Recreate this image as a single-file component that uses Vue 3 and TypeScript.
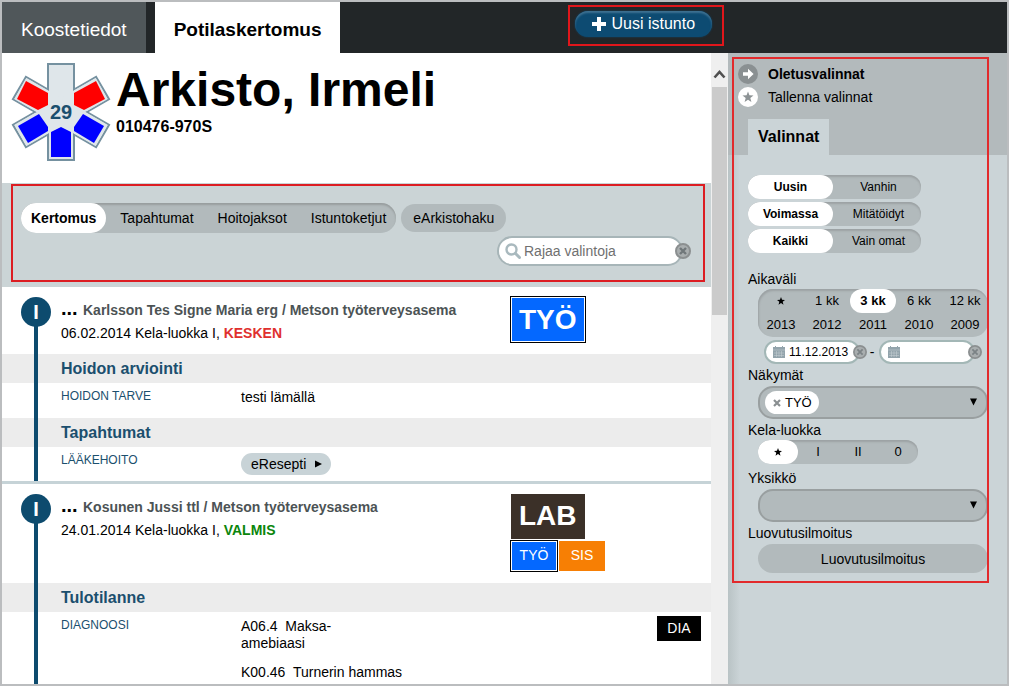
<script setup lang="ts">
import { ref } from 'vue'

interface Row {
  label: string
  lines?: string[][]
  link?: string
  badge?: string
}
interface Section {
  title: string
  rows: Row[]
}
interface Entry {
  mark: string
  author: string
  info: string
  status: string
  state: 'pending' | 'done'
  tall: boolean
  main: { text: string; kind: string }
  extra: { text: string; kind: string }[]
  sections: Section[]
}

const views = ['Kertomus', 'Tapahtumat', 'Hoitojaksot', 'Istuntoketjut']
const activeView = ref('Kertomus')

const toggles = ref([
  { options: ['Uusin', 'Vanhin'], active: 0 },
  { options: ['Voimassa', 'Mitätöidyt'], active: 0 },
  { options: ['Kaikki', 'Vain omat'], active: 0 },
])

const periods = ['★', '1 kk', '3 kk', '6 kk', '12 kk', '2013', '2012', '2011', '2010', '2009']
const activePeriod = ref('3 kk')
const classes = ['★', 'I', 'II', '0']
const activeClass = ref('★')

const search = ref('')
const from = ref('11.12.2013')
const to = ref('')

const entries: Entry[] = [
  {
    mark: 'I',
    author: 'Karlsson Tes Signe Maria erg / Metson työterveysasema',
    info: '06.02.2014 Kela-luokka I,',
    status: 'KESKEN',
    state: 'pending',
    tall: false,
    main: { text: 'TYÖ', kind: 'blue' },
    extra: [],
    sections: [
      { title: 'Hoidon arviointi', rows: [{ label: 'HOIDON TARVE', lines: [['testi lämällä']] }] },
      { title: 'Tapahtumat', rows: [{ label: 'LÄÄKEHOITO', link: 'eResepti' }] },
    ],
  },
  {
    mark: 'I',
    author: 'Kosunen Jussi ttl / Metson työterveysasema',
    info: '24.01.2014 Kela-luokka I,',
    status: 'VALMIS',
    state: 'done',
    tall: true,
    main: { text: 'LAB', kind: 'brown' },
    extra: [
      { text: 'TYÖ', kind: 'blue' },
      { text: 'SIS', kind: 'orange' },
    ],
    sections: [
      {
        title: 'Tulotilanne',
        rows: [
          {
            label: 'DIAGNOOSI',
            lines: [['A06.4\u00a0 Maksa-', 'amebiaasi'], ['K00.46\u00a0 Turnerin hammas']],
            badge: 'DIA',
          },
        ],
      },
    ],
  },
]

const starPoints = '5,0 6.3,3.5 10,3.7 7.1,6 8.1,9.6 5,7.5 1.9,9.6 2.9,6 0,3.7 3.7,3.5'
</script>

<template>
  <div class="app">
    <header class="top">
      <nav class="tabs">
        <a href="#koosteet" class="tab">Koostetiedot</a>
        <a href="#kertomus" class="tab current">Potilaskertomus</a>
      </nav>
      <div class="marked">
        <button type="button" class="new-session">
          <svg width="14" height="14" viewBox="0 0 14 14" aria-hidden="true">
            <path d="M5 0h4v5h5v4H9v5H5V9H0V5h5z" fill="#fff" />
          </svg>
          Uusi istunto
        </button>
      </div>
    </header>

    <div class="body">
      <main class="record">
        <section class="patient">
          <svg class="life" width="100" height="100" viewBox="11 62 100 100" aria-hidden="true">
            <g fill="#dfe6ea" stroke="#7591a0" stroke-width="2">
              <rect x="48" y="64" width="26" height="96" />
              <rect x="48" y="64" width="26" height="96" transform="rotate(60 61 112)" />
              <rect x="48" y="64" width="26" height="96" transform="rotate(-60 61 112)" />
            </g>
            <g fill="#dfe6ea">
              <rect x="49" y="65" width="24" height="94" />
              <rect x="49" y="65" width="24" height="94" transform="rotate(60 61 112)" />
              <rect x="49" y="65" width="24" height="94" transform="rotate(-60 61 112)" />
            </g>
            <g fill="#f00">
              <path d="M26 81 48 93V105L38 110 17 99z" />
              <path d="M96 81 74 93V105L84 110 105 99z" />
            </g>
            <g fill="#00f">
              <path d="M18 126 39 114 48 127V131L28 143z" />
              <path d="M104 126 83 114 74 127V131L94 143z" />
              <path d="M51 157V132L61 127 71 132V157z" />
            </g>
            <text x="61" y="119" text-anchor="middle" class="age">29</text>
          </svg>
          <div>
            <h1>Arkisto, Irmeli</h1>
            <p class="pid">010476-970S</p>
          </div>
        </section>

        <section class="filters">
          <div class="view-row">
            <div class="views">
              <button
                v-for="v in views"
                :key="v"
                type="button"
                :class="{ on: v === activeView }"
                :aria-pressed="v === activeView"
                @click="activeView = v"
              >
                {{ v }}
              </button>
            </div>
            <button type="button" class="archive">eArkistohaku</button>
          </div>
          <div class="search">
            <svg class="lens" width="16" height="16" viewBox="0 0 16 16" aria-hidden="true">
              <circle cx="6.5" cy="6.5" r="5" fill="none" stroke="#a9b9be" stroke-width="2.4" />
              <path d="M10.5 10.5 14.5 14.5" stroke="#a9b9be" stroke-width="3" stroke-linecap="round" />
            </svg>
            <input v-model="search" type="text" placeholder="Rajaa valintoja" aria-label="Rajaa valintoja" />
            <button type="button" class="clear" aria-label="Tyhjennä" @click="search = ''">
              <svg width="16" height="16" viewBox="0 0 16 16">
                <circle cx="8" cy="8" r="7" fill="#a9aeaf" stroke="#8b8f90" stroke-width="2" />
                <path d="M5 5l6 6M11 5l-6 6" stroke="#70777a" stroke-width="2.4" />
              </svg>
            </button>
          </div>
        </section>

        <article v-for="e in entries" :key="e.author" class="entry">
          <div class="head" :class="{ tall: e.tall }">
            <span class="mark">{{ e.mark }}</span>
            <div class="who">
              <p class="author"><span class="dots">...</span>{{ e.author }}</p>
              <p class="info">{{ e.info }} <strong :class="e.state">{{ e.status }}</strong></p>
            </div>
            <div class="badges">
              <span class="badge big" :class="e.main.kind">{{ e.main.text }}</span>
              <div v-if="e.extra.length" class="extra">
                <span v-for="b in e.extra" :key="b.text" class="badge" :class="b.kind">{{ b.text }}</span>
              </div>
            </div>
          </div>
          <section v-for="s in e.sections" :key="s.title">
            <h2>{{ s.title }}</h2>
            <div v-for="r in s.rows" :key="r.label" class="row">
              <span class="label">{{ r.label }}</span>
              <div class="value">
                <p v-for="(l, i) in r.lines" :key="i">
                  <template v-for="(part, j) in l" :key="j"><br v-if="j > 0" />{{ part }}</template>
                </p>
                <button v-if="r.link" type="button" class="open">
                  {{ r.link }}
                  <svg width="7" height="8" viewBox="0 0 7 8" aria-hidden="true"><path d="M0 0.5 7 4 0 7.5z" /></svg>
                </button>
              </div>
              <span v-if="r.badge" class="dia">{{ r.badge }}</span>
            </div>
          </section>
        </article>
      </main>

      <div class="scroll" aria-hidden="true">
        <svg width="13" height="10" viewBox="0 0 13 10">
          <path d="M1.5 8.5 6.5 3 11.5 8.5" fill="none" stroke="#505050" stroke-width="2.6" />
        </svg>
        <div class="thumb"></div>
      </div>

      <aside class="side">
        <div class="panel">
          <div class="side-top">
            <button type="button" class="preset strong">
              <svg width="20" height="20" viewBox="0 0 20 20" aria-hidden="true">
                <circle cx="10" cy="10" r="10" fill="#8a9092" />
                <path d="M5 8.2h5V4.8L15.6 10 10 15.2v-3.4H5z" fill="#fff" />
              </svg>
              Oletusvalinnat
            </button>
            <button type="button" class="preset">
              <svg width="20" height="20" viewBox="0 0 20 20" aria-hidden="true">
                <circle cx="10" cy="10" r="10" fill="#fff" />
                <polygon :points="starPoints" transform="translate(4.5 4.5) scale(1.1)" fill="#8d9395" />
              </svg>
              Tallenna valinnat
            </button>
            <h3>Valinnat</h3>
          </div>

          <div class="options">
            <div class="toggles">
              <div v-for="(t, ti) in toggles" :key="ti" class="toggle">
                <button
                  v-for="(o, oi) in t.options"
                  :key="o"
                  type="button"
                  :class="{ on: oi === t.active }"
                  :aria-pressed="oi === t.active"
                  @click="t.active = oi"
                >
                  {{ o }}
                </button>
              </div>
            </div>

            <label for="from">Aikaväli</label>
            <div class="periods">
              <button
                v-for="p in periods"
                :key="p"
                type="button"
                :class="{ on: p === activePeriod }"
                :aria-label="p"
                @click="activePeriod = p"
              >
                <svg v-if="p === '★'" width="8" height="8" viewBox="0 0 10 10"><polygon :points="starPoints" /></svg>
                <template v-else>{{ p }}</template>
              </button>
            </div>
            <div class="dates">
              <div class="date">
                <svg class="cal" width="12" height="12" viewBox="0 0 12 12" aria-hidden="true">
                  <path d="M0 1h2V0h1v1h6V0h1v1h2v11H0z" fill="#93a4ac" />
                  <path d="M0 4h12M1 7h10M1 9.5h10M3.5 5v6M6 5v6M8.5 5v6" stroke="#c9d3d7" stroke-width="0.5" />
                </svg>
                <input id="from" v-model="from" type="text" />
                <button type="button" class="clear" aria-label="Tyhjennä alku" @click="from = ''">
                  <svg width="14" height="14" viewBox="0 0 16 16">
                    <circle cx="8" cy="8" r="7" fill="#a9aeaf" stroke="#8b8f90" stroke-width="2" />
                    <path d="M5 5l6 6M11 5l-6 6" stroke="#7b8285" stroke-width="2" />
                  </svg>
                </button>
              </div>
              <span>-</span>
              <div class="date">
                <svg class="cal" width="12" height="12" viewBox="0 0 12 12" aria-hidden="true">
                  <path d="M0 1h2V0h1v1h6V0h1v1h2v11H0z" fill="#93a4ac" />
                  <path d="M0 4h12M1 7h10M1 9.5h10M3.5 5v6M6 5v6M8.5 5v6" stroke="#c9d3d7" stroke-width="0.5" />
                </svg>
                <input v-model="to" type="text" aria-label="Loppupäivä" />
                <button type="button" class="clear" aria-label="Tyhjennä loppu" @click="to = ''">
                  <svg width="14" height="14" viewBox="0 0 16 16">
                    <circle cx="8" cy="8" r="7" fill="#a9aeaf" stroke="#8b8f90" stroke-width="2" />
                    <path d="M5 5l6 6M11 5l-6 6" stroke="#7b8285" stroke-width="2" />
                  </svg>
                </button>
              </div>
            </div>

            <label for="views">Näkymät</label>
            <div class="select">
              <select id="views"><option></option></select>
              <button type="button" class="chip">
                <svg width="8" height="8" viewBox="0 0 8 8" aria-hidden="true">
                  <path d="M1 1l6 6M7 1l-6 6" stroke="#8a8f91" stroke-width="2.2" />
                </svg>
                TYÖ
              </button>
              <svg class="arrow" width="7" height="8" viewBox="0 0 7 8" aria-hidden="true"><path d="M0 0.5h7L3.5 7.5z" /></svg>
            </div>

            <span id="kela">Kela-luokka</span>
            <div class="classes" role="group" aria-labelledby="kela">
              <button
                v-for="c in classes"
                :key="c"
                type="button"
                :class="{ on: c === activeClass }"
                :aria-label="c"
                @click="activeClass = c"
              >
                <svg v-if="c === '★'" width="8" height="8" viewBox="0 0 10 10"><polygon :points="starPoints" /></svg>
                <template v-else>{{ c }}</template>
              </button>
            </div>

            <label for="unit">Yksikkö</label>
            <div class="select">
              <select id="unit"><option></option></select>
              <svg class="arrow" width="7" height="8" viewBox="0 0 7 8" aria-hidden="true"><path d="M0 0.5h7L3.5 7.5z" /></svg>
            </div>

            <label for="notice">Luovutusilmoitus</label>
            <button id="notice" type="button" class="notice">Luovutusilmoitus</button>
          </div>
        </div>
      </aside>
    </div>
  </div>
</template>

<style>
body {
  margin: 0;
}
</style>

<style scoped>
.app,
.app * {
  box-sizing: border-box;
}
.app {
  display: flex;
  flex-direction: column;
  height: 100vh;
  border: 2px solid #bbbdbf;
  background: #fff;
  color: #000;
  font-family: "Liberation Sans", Arial, sans-serif;
  font-size: 14px;
  line-height: 18px;
}
h1,
h2,
h3,
p {
  margin: 0;
}
button,
input,
select {
  margin: 0;
  padding: 0;
  border: 0;
  background: none;
  color: inherit;
  font: inherit;
}
svg {
  display: block;
  flex: none;
}

.top {
  display: flex;
  flex: none;
  height: 51px;
  background: #222628;
}
.tabs {
  display: flex;
  gap: 9px;
}
.tab {
  display: flex;
  align-items: center;
  padding: 4px 19px 0;
  background: #50575a;
  color: #fff;
  font-size: 19px;
  text-decoration: none;
}
.tab.current {
  background: #fff;
  color: #000;
  font-weight: bold;
}
.marked {
  display: flex;
  align-self: flex-start;
  height: 41px;
  margin: 3px 0 0 228px;
  padding: 4px 10px 8px 5px;
  border: 2px solid #e0161b;
}
.new-session {
  display: flex;
  align-items: center;
  gap: 5px;
  height: 26px;
  padding: 0 17px;
  border-radius: 13px;
  background: #0d4b72;
  box-shadow: inset 0 2px 2px #3f7191, 0 0 2px #0d4b72;
  color: #fff;
  font-size: 16px;
}

.body {
  display: flex;
  flex: 1;
  min-height: 0;
}
.record {
  flex: 1;
  min-width: 0;
  overflow: hidden;
}
.patient {
  display: flex;
  gap: 5px;
  height: 130px;
  padding: 9px 9px 0;
}
.age {
  fill: #1b4f6e;
  font-size: 20px;
  font-weight: bold;
}
h1 {
  font-size: 48px;
  line-height: 56px;
}
.pid {
  font-size: 16px;
  font-weight: bold;
}

.filters {
  position: relative;
  height: 104px;
  padding: 20px 20px 0 19px;
  background: #cbd4d6;
}
.filters::after {
  content: "";
  position: absolute;
  inset: 1px 6px 5px 9px;
  border: 2px solid #dc1d22;
  pointer-events: none;
}
.view-row {
  display: flex;
  align-items: center;
  gap: 5px;
}
.views {
  display: flex;
  gap: 4px;
  height: 30px;
  border-radius: 15px;
  background: #b2babc;
  box-shadow: inset 0 2px 2px #989e9f;
}
.views button {
  padding: 0 10px;
  border-radius: 15px;
}
.views .on,
.toggle .on {
  background: #fff;
  font-weight: bold;
}
.archive {
  height: 28px;
  padding: 0 12px;
  border-radius: 14px;
  background: #b2babc;
}
.search {
  position: relative;
  width: 186px;
  margin: 3px 8px 0 auto;
}
.search input {
  display: block;
  width: 100%;
  height: 30px;
  padding: 0 20px 0 25px;
  border: 2px solid #a7b5b8;
  border-radius: 15px;
  background: #fff;
}
.search input::placeholder {
  color: #707070;
  opacity: 1;
}
.lens {
  position: absolute;
  top: 7px;
  left: 8px;
}
.clear {
  position: absolute;
  top: 50%;
  right: 0;
  transform: translate(50%, -50%);
}

.entry {
  position: relative;
  border-bottom: 3px solid #c6d3d7;
}
.entry::before {
  content: "";
  position: absolute;
  top: 20px;
  bottom: 0;
  left: 32px;
  width: 4px;
  background: #0d4b6e;
}
.head {
  display: flex;
  min-height: 67px;
  padding: 10px 0 0 19px;
}
.head.tall {
  min-height: 99px;
}
.mark {
  position: relative;
  width: 30px;
  height: 30px;
  border-radius: 50%;
  background: #0d4b6e;
  color: #fff;
  font-size: 20px;
  font-weight: bold;
  line-height: 30px;
  text-align: center;
}
.who {
  width: 460px;
  padding: 2px 0 0 10px;
}
.author {
  color: #4c5355;
  font-weight: bold;
}
.dots {
  display: inline-block;
  width: 22px;
  color: #000;
  font-size: 20px;
}
.info {
  margin-top: 5px;
}
.pending {
  color: #e0302e;
}
.done {
  color: #0b860b;
}
.badge {
  display: block;
  min-width: 46px;
  height: 30px;
  color: #fff;
  line-height: 28px;
  text-align: center;
}
.badge.big {
  width: max-content;
  height: 45px;
  padding: 0 8px;
  font-size: 28px;
  font-weight: bold;
  line-height: 44px;
}
.blue {
  border: 1px solid #fff;
  outline: 1px solid #000;
  background: #0468ff;
}
.blue.badge {
  line-height: 26px;
}
.blue.badge.big {
  padding: 0 7px;
  line-height: 44px;
}
.brown {
  background: #3b3028;
}
.orange {
  background: #f77f04;
}
.extra {
  display: flex;
  gap: 2px;
  margin-top: 2px;
}
h2 {
  height: 29px;
  padding-left: 59px;
  background: #ececec;
  color: #1b4f6e;
  font-size: 16px;
  line-height: 29px;
}
.row {
  display: flex;
  min-height: 34px;
  padding: 4px 10px 0 59px;
}
.label {
  width: 180px;
  color: #1b4f6e;
  font-size: 12px;
}
.value {
  flex: 1;
}
.value p {
  margin-bottom: 12px;
  padding-top: 2px;
  line-height: 17px;
}
.value p + p {
  padding-top: 0;
}
.open {
  display: flex;
  align-items: center;
  gap: 9px;
  height: 22px;
  margin-top: 2px;
  padding: 0 9px 0 10px;
  border-radius: 11px;
  background: #c8d3d7;
}
.dia {
  width: 44px;
  height: 25px;
  background: #000;
  color: #fff;
  line-height: 25px;
  text-align: center;
}

.scroll {
  flex: none;
  width: 17px;
  padding: 16px 1px 0;
  background: #efefef;
}
.scroll svg {
  margin: 0 1px;
}
.thumb {
  height: 228px;
  margin-top: 8px;
  background: #cbcbcb;
}

.side {
  flex: none;
  width: 279px;
  background: linear-gradient(90deg, #b9c3c5, #cbd4d7 12px);
}
.panel {
  position: relative;
}
.panel::after {
  content: "";
  position: absolute;
  inset: 4px 18px 0 4px;
  border: 2px solid #e22a2c;
  pointer-events: none;
}
.side-top {
  display: flex;
  flex-direction: column;
  align-items: flex-start;
  gap: 3px;
  height: 102px;
  padding: 11px 10px 0;
  background: #b3babc;
}
.preset {
  display: flex;
  align-items: center;
  gap: 10px;
  height: 20px;
}
.strong {
  font-weight: bold;
}
h3 {
  height: 36px;
  margin: 9px 0 0 10px;
  padding: 0 10px;
  background: #cbd4d7;
  font-size: 16px;
  line-height: 35px;
}
.options {
  display: flex;
  flex-direction: column;
  padding: 20px 19px 10px 20px;
}
.toggles {
  display: grid;
  gap: 3px;
  margin-bottom: 17px;
}
.toggle {
  display: flex;
  justify-content: space-between;
  width: 173px;
  height: 24px;
  border-radius: 12px;
  background: #b2babc;
  box-shadow: inset 0 2px 2px #9ca2a4;
  font-size: 12px;
}
.toggle button {
  width: 85px;
  border-radius: 12px;
}
.periods,
.classes,
.select,
.notice {
  margin-left: 10px;
}
.periods {
  display: grid;
  grid-template-columns: repeat(5, 1fr);
  grid-auto-rows: 24px;
  margin-top: 1px;
  border-radius: 15px;
  background: #b2babc;
  box-shadow: inset 1px 2px 2px #9ca2a4;
  font-size: 13px;
}
.periods button,
.classes button {
  display: flex;
  align-items: center;
  justify-content: center;
  border-radius: 12px;
}
.periods .on,
.classes .on {
  background: #fff;
  font-weight: bold;
}
.dates {
  display: flex;
  gap: 5px;
  align-items: center;
  margin: 3px 13px 2px 16px;
}
.date {
  position: relative;
  flex: 1;
}
.dates span {
  margin-left: 5px;
}
.date input {
  display: block;
  width: 100%;
  height: 24px;
  padding: 0 4px 0 23px;
  border: 2px solid #a3b7b6;
  border-radius: 12px;
  background: #fff;
  font-size: 12px;
}
.cal {
  position: absolute;
  top: 6px;
  left: 9px;
}
.select {
  position: relative;
  margin-top: 2px;
  margin-bottom: 2px;
}
.select select {
  display: block;
  width: 100%;
  height: 33px;
  border: 2px solid #999fa0;
  border-radius: 15px;
  background: #b2babc;
  appearance: none;
}
.arrow {
  position: absolute;
  top: 12px;
  right: 11px;
}
.chip {
  position: absolute;
  top: 5px;
  left: 7px;
  display: flex;
  gap: 4px;
  align-items: center;
  height: 23px;
  padding: 0 7px 0 8px;
  border-radius: 12px;
  background: #fff;
  font-size: 13px;
}
.classes {
  display: grid;
  grid-template-columns: repeat(4, 40px);
  align-self: flex-start;
  height: 24px;
  margin-top: 1px;
  margin-bottom: 5px;
  border-radius: 12px;
  background: #b2babc;
  box-shadow: inset 0 2px 2px #9ca2a4;
  font-size: 13px;
}
.notice {
  height: 29px;
  margin-top: 2px;
  border-radius: 15px;
  background: #b2babc;
}
</style>
